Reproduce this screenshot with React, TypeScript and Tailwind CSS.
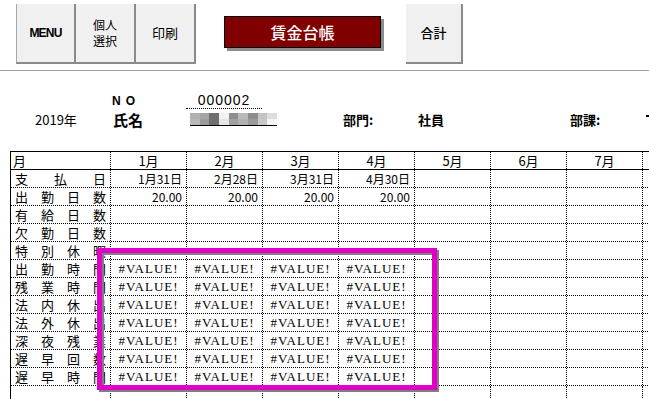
import React from "react";

const jp = "font-['Noto_Sans_CJK_JP',sans-serif]";

const months = ["1月", "2月", "3月", "4月", "5月", "6月", "7月", ""];

type Row = { label: string; values: string[] };

const rows: Row[] = [
  { label: "支払日", values: ["1月31日", "2月28日", "3月31日", "4月30日"] },
  { label: "出勤日数", values: ["20.00", "20.00", "20.00", "20.00"] },
  { label: "有給日数", values: [] },
  { label: "欠勤日数", values: [] },
  { label: "特別休暇", values: [] },
  { label: "出勤時間", values: ["#VALUE!", "#VALUE!", "#VALUE!", "#VALUE!"] },
  { label: "残業時間", values: ["#VALUE!", "#VALUE!", "#VALUE!", "#VALUE!"] },
  { label: "法内休出", values: ["#VALUE!", "#VALUE!", "#VALUE!", "#VALUE!"] },
  { label: "法外休出", values: ["#VALUE!", "#VALUE!", "#VALUE!", "#VALUE!"] },
  { label: "深夜残業", values: ["#VALUE!", "#VALUE!", "#VALUE!", "#VALUE!"] },
  { label: "遅早回数", values: ["#VALUE!", "#VALUE!", "#VALUE!", "#VALUE!"] },
  { label: "遅早時間", values: ["#VALUE!", "#VALUE!", "#VALUE!", "#VALUE!"] },
];

const blurTop = ["#b0b0b0", "#a6a6a6", "#6e6e6e", "#f2f2f2", "#8e8e8e", "#b9b9b9", "#8c8c8c", "#c4c4c4", "#dcdcdc"];
const blurBottom = ["#b8b8b8", "#9c9c9c", "#707070", "#e6e6e6", "#a0a0a0", "#b0b0b0", "#9a9a9a", "#c8c8c8", "#f4f4f4"];

function ToolButton({ children, className = "" }: { children: React.ReactNode; className?: string }) {
  return (
    <div
      className={`h-[60px] shrink-0 bg-[#f0f0f0] border-r-2 border-b-2 border-[#8a8a8a] flex items-center justify-center text-black ${className}`}
    >
      {children}
    </div>
  );
}

export default function App() {
  return (
    <div className="w-[649px] h-[399px] overflow-hidden bg-white relative text-black">
      {/* toolbar */}
      <div className="flex items-start pt-[4px] pl-[16px] h-[70px]">
        <ToolButton className="w-[60px] border-l border-l-[#a8a8a8]">
          <span className="font-['Liberation_Sans',sans-serif] font-bold text-[12px] tracking-[-0.8px]">MENU</span>
        </ToolButton>
        <ToolButton className="w-[60px]">
          <span className={`${jp} text-[12px] leading-[16px] text-center`}>
            個人
            <br />
            選択
          </span>
        </ToolButton>
        <ToolButton className="w-[60px]">
          <span className={`${jp} text-[13px]`}>印刷</span>
        </ToolButton>
        <div className="ml-[28px] mt-[12px] shrink-0 w-[157px] h-[32px] bg-[#800000] border border-black shadow-[3px_3px_0_#8c8c8c] flex items-center justify-center">
          <span className={`${jp} text-white text-[16px] font-medium`}>賃金台帳</span>
        </div>
        <ToolButton className="ml-[25px] w-[57px]">
          <span className={`${jp} text-[13px] font-medium`}>合計</span>
        </ToolButton>
      </div>
      <div className="h-px bg-[#a0a0a0]" />

      {/* info */}
      <div className="h-[80px] pt-[22px]">
        <div className="flex items-end h-[16px]">
          <div className="ml-[112px] w-[74px] shrink-0 font-['Liberation_Sans',sans-serif] font-bold text-[12px] tracking-[5px] leading-[15px]">
            NO
          </div>
          <div className="w-[76px] shrink-0 h-[16px] border-b border-dotted border-black flex items-end justify-center font-['Liberation_Sans',sans-serif] text-[14px] leading-[15px] tracking-[1px]">
            000002
          </div>
        </div>
        <div className="flex items-end mt-[3px] h-[16px]">
          <div className={`ml-[35px] w-[78px] shrink-0 ${jp} text-[13px] leading-[16px]`}>2019年</div>
          <div className={`w-[77px] shrink-0 ${jp} font-bold text-[15px] leading-[16px]`}>氏名</div>
          <div className="w-[153px] shrink-0 flex flex-col">
            <div className="w-[87px] grid grid-cols-9">
              {blurTop.map((c, i) => (
                <div key={`t${i}`} className="h-[6px]" style={{ backgroundColor: c }} />
              ))}
              {blurBottom.map((c, i) => (
                <div key={`b${i}`} className="h-[6px]" style={{ backgroundColor: c }} />
              ))}
            </div>
            <div className="w-[87px] h-px bg-black" />
            <div className="h-[2px]" />
          </div>
          <div className={`w-[75px] shrink-0 ${jp} font-bold text-[13px] leading-[16px]`}>部門:</div>
          <div className={`w-[152px] shrink-0 ${jp} font-bold text-[13px] leading-[16px]`}>社員</div>
          <div className={`w-[76px] shrink-0 ${jp} font-bold text-[13px] leading-[16px]`}>部課:</div>
          <div className="w-[3px] h-[10px] shrink-0 mb-[3px] border-t-2 border-black" />
        </div>
      </div>

      {/* table */}
      <div className="ml-[10px] w-[720px] border-t border-l border-black">
        <div className="flex h-[18px] border-b border-black">
          <div className={`w-[100px] shrink-0 border-r border-dotted border-black ${jp} text-[13px] leading-[17px] pl-[2px]`}>
            月
          </div>
          {months.map((m, i) => (
            <div
              key={i}
              className={`w-[76px] shrink-0 border-r border-dotted border-black ${jp} text-[13px] leading-[17px] text-center`}
            >
              {m}
            </div>
          ))}
        </div>
        {rows.map((r) => (
          <div key={r.label} className="flex h-[18px] border-b border-dotted border-black">
            <div
              className={`w-[100px] shrink-0 border-r border-dotted border-black ${jp} text-[13px] leading-[17px] flex justify-between px-[4px]`}
            >
              {r.label.split("").map((ch, i) => (
                <span key={i}>{ch}</span>
              ))}
            </div>
            {months.map((_, i) => {
              const v = r.values[i] ?? "";
              const isErr = v.startsWith("#");
              return (
                <div
                  key={i}
                  className={`w-[76px] shrink-0 border-r border-dotted border-black leading-[17px] ${
                    isErr
                      ? "font-['Liberation_Serif',serif] text-[13px] tracking-[1px] text-center"
                      : `${jp} text-[12px] text-right pr-[4px]`
                  }`}
                >
                  {v}
                </div>
              );
            })}
          </div>
        ))}
        <div className="flex h-[18px]">
          <div className="w-[100px] shrink-0 border-r border-dotted border-black" />
          {months.map((_, i) => (
            <div key={i} className="w-[76px] shrink-0 border-r border-dotted border-black" />
          ))}
        </div>
      </div>

      {/* magenta highlight */}
      <div className="absolute left-[97px] top-[248px] w-[340px] h-[142px] border-[5px] border-[#e000c8] shadow-[2px_2px_0_#808080,inset_2px_2px_0_#808080]" />
    </div>
  );
}
